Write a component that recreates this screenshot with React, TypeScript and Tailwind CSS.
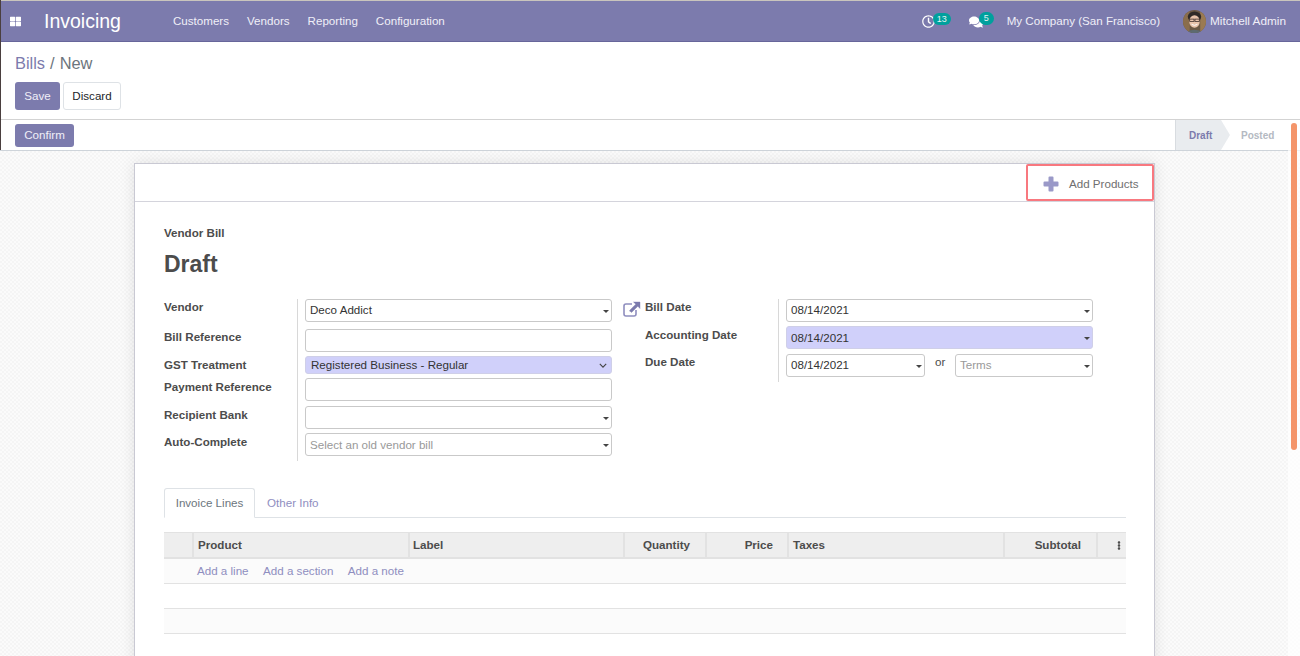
import React from "react";
import { FaThLarge, FaComments, FaRegClock, FaEllipsisV } from "react-icons/fa";

const Caret = () => (
  <span className="absolute right-[2px] top-1/2 -translate-y-[1px] w-0 h-0 border-x-[3px] border-x-transparent border-t-[3px] border-t-[#444]" />
);

function Field({ value, placeholder, caret, hl, up, w = "w-[307px]", h = "h-[23px]", mt = "" }: { value?: string; placeholder?: string; caret?: boolean; hl?: boolean; up?: boolean; w?: string; h?: string; mt?: string }) {
  return (
    <div className={`relative ${w} ${h} ${mt} shrink-0 flex items-center px-[4px] rounded-[3px] border border-[#c9c9c9] ${hl ? "bg-[#d0d0fa] border-[#cfcfe8]" : "bg-white"}`}>
      {value ? <span className={`text-[#333] ${up ? "-translate-y-px" : ""}`}>{value}</span> : <span className={`text-[#999] ${up ? "-translate-y-px" : ""}`}>{placeholder}</span>}
      {caret && <Caret />}
    </div>
  );
}

function Label({ children, className = "" }: { children: React.ReactNode; className?: string }) {
  return <div className={`font-bold text-[#4c4c4c] leading-[16px] ${className}`}>{children}</div>;
}

function Th({ children, w, pad = "px-[4px]", noBorder }: { children?: React.ReactNode; w: string; pad?: string; noBorder?: boolean }) {
  return (
    <div className={`${w} ${pad} shrink-0 h-full flex items-center font-bold text-[#4c4c4c] ${noBorder ? "" : "border-r-2 border-[#e2e2e2]"}`}>
      {children}
    </div>
  );
}

export default function App() {
  return (
    <div className="relative w-[1300px] h-[656px] overflow-hidden flex flex-col bg-white text-[11.6px] font-['Liberation_Sans',Arial,sans-serif] text-[#4c4c4c]">
      {/* Navbar */}
      <header className="h-[42px] shrink-0 flex items-center bg-[#7c7bad] border-t border-t-[#c9c5bd] border-b border-b-[#67669a] text-[#f0eff8]">
        <FaThLarge className="ml-[10px] w-[11px] h-[11px] text-white" />
        <div className="ml-[23px] text-[19.5px] leading-none text-white translate-y-px">Invoicing</div>
        <nav className="ml-[52px] flex gap-[18px]">
          <span>Customers</span>
          <span>Vendors</span>
          <span>Reporting</span>
          <span>Configuration</span>
        </nav>
        <div className="ml-auto flex items-center">
          <div className="relative w-[13px] h-[14px] mr-[34px]">
            <FaRegClock className="w-[13px] h-[13px] text-white mt-[1px]" />
            <span className="absolute left-[11px] -top-[1px] h-[12px] w-[18px] rounded-full bg-[#00a09d] text-[9px] leading-[12px] text-center text-[#e4f4f4]">13</span>
          </div>
          <div className="relative w-[14px] h-[14px] mr-[24px]">
            <FaComments className="w-[14px] h-[14px] text-white mt-[1px]" />
            <span className="absolute left-[10px] -top-[2px] h-[13px] w-[15px] rounded-full bg-[#00a09d] text-[9px] leading-[12px] text-center text-[#e4f4f4]">5</span>
          </div>
          <span>My Company (San Francisco)</span>
          <svg viewBox="0 0 24 24" className="ml-[23px] w-[23px] h-[23px] rounded-full shrink-0">
            <rect width="24" height="24" fill="#6b5844" />
            <rect x="0" y="0" width="7" height="24" fill="#8a6d4c" />
            <rect x="18" y="0" width="6" height="24" fill="#9a7a52" />
            <ellipse cx="12" cy="7" rx="7" ry="5.5" fill="#2f2a28" />
            <ellipse cx="12" cy="12" rx="5.5" ry="6.5" fill="#e9c4ac" />
            <rect x="7" y="9.5" width="4.5" height="2.6" fill="none" stroke="#3a2c28" strokeWidth="0.8" />
            <rect x="12.5" y="9.5" width="4.5" height="2.6" fill="none" stroke="#3a2c28" strokeWidth="0.8" />
            <path d="M9 15 Q12 17 15 15" stroke="#fff" strokeWidth="1" fill="none" />
            <path d="M2 24 Q12 17 22 24Z" fill="#5d6a70" />
          </svg>
          <span className="ml-[4px] mr-[14px] w-[76px] whitespace-nowrap text-[11.8px] translate-y-px">Mitchell Admin</span>
        </div>
      </header>

      {/* Control panel */}
      <div className="h-[78px] shrink-0 border-b border-[#d3d3d3] pl-[15px] pt-[11px]">
        <div className="text-[16.4px] leading-[20px] text-[#6c757d]"><span className="text-[#7c7bad]">Bills</span><span className="mx-[5px]">/</span>New</div>
        <div className="flex gap-[3px] mt-[9px]">
          <button className="h-[28px] w-[45px] rounded-[3px] bg-[#7c7bad] text-[#f0eff8]">Save</button>
          <button className="h-[28px] w-[58px] rounded-[3px] bg-white border border-[#dee2e6] text-[#212529]">Discard</button>
        </div>
      </div>

      {/* Status bar */}
      <div className="h-[31px] shrink-0 border-b border-[#ced4da] flex items-center pl-[15px] pr-[13px]">
        <button className="h-[23px] w-[59px] rounded-[3px] bg-[#7c7bad] text-[#f0eff8]">Confirm</button>
        <div className="ml-auto h-full flex items-center text-[10px] font-bold">
          <div className="relative h-full w-[46px] bg-[#e9ecef] flex items-center pl-[13px] border-l border-[#d8dce0] text-[#7c7bad]">
            Draft
            <svg viewBox="0 0 9 30" className="absolute left-full top-0 w-[9px] h-full" preserveAspectRatio="none"><path d="M0 0 L9 15 L0 30Z" fill="#e9ecef" /></svg>
          </div>
          <div className="ml-[20px] w-[46px] text-[#b4b9c2]">Posted</div>
        </div>
      </div>

      {/* Form view */}
      <main className="flex-1 min-h-0 pt-[12px] pl-[134px] bg-[#f8f8f8] bg-[repeating-conic-gradient(#f5f5f5_0_25%,#fbfbfb_0_50%)] bg-[length:4px_4px]">
        <section className="w-[1021px] h-[600px] bg-white border border-[#c9c9d3] shadow-[0_0_14px_rgba(0,0,0,0.10)]">
          <div className="h-[38px] border-b border-[#d4d4dc] flex justify-end">
            <div className="w-[128px] h-full pt-[2px] border-2 border-[#f8787f] rounded-[2px] flex items-center bg-white">
              <svg viewBox="0 0 16 16" className="ml-[15px] w-[16px] h-[16px] shrink-0">
                <path d="M6.5 0.5 h3 a1 1 0 0 1 1 1 v4 h4 a1 1 0 0 1 1 1 v3 a1 1 0 0 1 -1 1 h-4 v4 a1 1 0 0 1 -1 1 h-3 a1 1 0 0 1 -1 -1 v-4 h-4 a1 1 0 0 1 -1 -1 v-3 a1 1 0 0 1 1 -1 h4 v-4 a1 1 0 0 1 1 -1z" fill="#9a99c8" />
              </svg>
              <span className="ml-[10px] text-[#6f6f6f]">Add Products</span>
            </div>
          </div>

          <div className="pl-[29px] pr-[28px] pt-[24px]">
            <div className="font-bold text-[11.6px] leading-[14px]">Vendor Bill</div>
            <h1 className="mt-[10px] text-[23px] leading-[28px] font-bold text-[#4c4c4c]">Draft</h1>

            <div className="mt-[21px] flex">
              {/* Left */}
              <div className="flex">
                <div className="w-[133px] flex flex-col">
                  <Label>Vendor</Label>
                  <Label className="mt-[14px]">Bill Reference</Label>
                  <Label className="mt-[12px]">GST Treatment</Label>
                  <Label className="mt-[6px]">Payment Reference</Label>
                  <Label className="mt-[12px]">Recipient Bank</Label>
                  <Label className="mt-[11px]">Auto-Complete</Label>
                </div>
                <div className="h-[162px] border-l border-[#d8d8d8] pl-[7px] flex flex-col">
                  <Field value="Deco Addict" caret up />
                  <Field mt="mt-[7px]" />
                  <div className="relative mt-[4px] w-[307px] h-[18px] shrink-0 rounded-[3px] bg-[#d0d0fa] border border-[#cfcfe8] flex items-center pl-[5px] text-[#333]">
                    Registered Business - Regular
                    <svg viewBox="0 0 10 6" className="absolute right-[4px] top-[6px] w-[8px] h-[5px]"><path d="M1 1 L5 5 L9 1" fill="none" stroke="#444" strokeWidth="1.4" /></svg>
                  </div>
                  <Field mt="mt-[4px]" />
                  <Field mt="mt-[5px]" caret />
                  <Field mt="mt-[4px]" placeholder="Select an old vendor bill" caret />
                </div>
              </div>

              {/* External link icon */}
              <svg viewBox="0 0 18 16" className="ml-[11px] mt-[2px] w-[18px] h-[16px] shrink-0">
                <path d="M9 3 H3 Q1 3 1 5 V13 Q1 15 3 15 H11 Q13 15 13 13 V9" fill="none" stroke="#8f8ebf" strokeWidth="1.6" />
                <path d="M6.5 11 L13.5 4 M10.5 1 H17 V7.5 L14.8 5.2 L8.5 11.5 L6.5 9.5 L12.8 3.2Z" fill="#7c7bad" stroke="#7c7bad" strokeWidth="0.4" />
              </svg>

              {/* Right */}
              <div className="ml-[4px] flex">
                <div className="w-[133px] flex flex-col">
                  <Label>Bill Date</Label>
                  <Label className="mt-[12px]">Accounting Date</Label>
                  <Label className="mt-[11px]">Due Date</Label>
                </div>
                <div className="h-[83px] border-l border-[#d8d8d8] pl-[7px] flex flex-col">
                  <Field value="08/14/2021" caret up />
                  <Field mt="mt-[4px]" value="08/14/2021" caret hl />
                  <div className="mt-[5px] flex">
                    <Field w="w-[139px]" value="08/14/2021" caret up />
                    <span className="ml-[10px] w-[20px] text-[#4c4c4c] leading-[16px]">or</span>
                    <Field w="w-[138px]" placeholder="Terms" caret up />
                  </div>
                </div>
              </div>
            </div>

            {/* Tabs */}
            <div className="mt-[27px] flex h-[30px] border-b border-[#dee2e6]">
              <div className="h-[30px] w-[91px] bg-white border border-[#dee2e6] border-b-white rounded-t-[3px] flex items-center justify-center text-[#6c757d]">Invoice Lines</div>
              <div className="ml-[12px] flex items-center text-[#8f8ebf]">Other Info</div>
            </div>

            {/* Table */}
            <div className="mt-[14px] h-[27px] flex bg-[#eeeeee] border-t border-[#e2e2e2] border-b-2 border-b-[#e2e2e2]">
              <Th w="w-[30px]" />
              <Th w="w-[216px]">Product</Th>
              <Th w="w-[215px]" pad="pl-[3px]">Label</Th>
              <Th w="w-[82px]" pad="justify-end pr-[15px]">Quantity</Th>
              <Th w="w-[82px]" pad="justify-end pr-[14px]">Price</Th>
              <Th w="w-[216px]">Taxes</Th>
              <Th w="w-[93px]" pad="justify-end pr-[15px]">Subtotal</Th>
              <Th w="w-[27px]" noBorder><FaEllipsisV className="ml-[15px] w-[8px] h-[9px] text-[#4c4c4c]" /></Th>
            </div>
            <div className="h-[25px] flex items-center gap-[14.5px] pl-[33px] bg-[#fbfbfb] border-b border-[#e2e2e2] text-[#8f8ebf]">
              <span>Add a line</span>
              <span>Add a section</span>
              <span>Add a note</span>
            </div>
            <div className="h-[25px] border-b border-[#e2e2e2]" />
            <div className="h-[25px] bg-[#fbfbfb] border-b border-[#e2e2e2]" />
          </div>
        </section>
      </main>

      {/* scrollbar */}
      <div className="absolute right-0 top-[120px] bottom-0 w-[12px] bg-white/70">
        <div className="absolute left-[3px] top-[3px] w-[6px] h-[327px] rounded-full bg-[#f4956a]" />
      </div>
      <div className="absolute left-0 top-0 w-px h-[150px] bg-[#4a3f3f]" />
    </div>
  );
}
